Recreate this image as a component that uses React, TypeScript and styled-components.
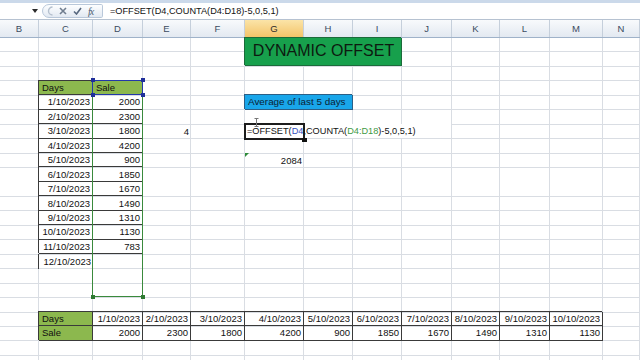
import styled, { createGlobalStyle, css } from "styled-components";

// column widths B..N as they appear in the zoomed sheet
const COLS = [39, 54, 50, 48, 54, 59, 49, 49, 50, 48, 50, 53, 37];
const LETTERS = ["B", "C", "D", "E", "F", "G", "H", "I", "J", "K", "L", "M", "N"];
const ROW_H = 14.45;
const TEMPLATE = COLS.map((w) => `${w}px`).join(" ");
const GRID = "#d9dde3";
const INK = "#3a3a3a";

const edges = COLS.reduce<number[]>((acc, w) => {
  const prev = acc.length ? acc[acc.length - 1] : -1;
  acc.push(prev + w);
  return acc;
}, []);
const vLines = edges
  .map((x) => `linear-gradient(${GRID}, ${GRID}) ${x}px 0 / 1px 100% no-repeat`)
  .join(", ");
const hLines = `repeating-linear-gradient(to bottom, transparent 0, transparent ${ROW_H - 1}px, ${GRID} ${ROW_H - 1}px, ${GRID} ${ROW_H}px)`;

const DATES = Array.from({ length: 12 }, (_, i) => `${i + 1}/10/2023`);
const SALES = [2000, 2300, 1800, 4200, 900, 1850, 1670, 1490, 1310, 1130, 783];

const GlobalStyle = createGlobalStyle`
  * { box-sizing: border-box; }
  body { margin: 0; background: #fff; }
`;

const Window = styled.div`
  width: 640px;
  height: 360px;
  overflow: hidden;
  background: #fff;
  display: flex;
  flex-direction: column;
  font-family: "Liberation Sans", Arial, sans-serif;
`;

const FormulaBar = styled.div`
  height: 20px;
  flex-shrink: 0;
  display: flex;
  align-items: center;
  border-top: 3px solid #cbd9ea;
  border-bottom: 1px solid #b6c2d1;
`;

const NameBox = styled.div`
  width: 42px;
  height: 100%;
  display: flex;
  align-items: center;
  justify-content: flex-end;
  padding-right: 4px;
`;

const FxPill = styled.div`
  width: 61px;
  height: 14px;
  display: flex;
  align-items: center;
  gap: 6px;
  padding-left: 4px;
  border: 1px solid #b9c8da;
  border-radius: 8px 2px 2px 8px;
  background: linear-gradient(#fdfeff, #e2e9f2);
`;

const Fx = styled.span`
  font-family: "Liberation Serif", serif;
  font-style: italic;
  font-size: 10px;
  color: #4e5d72;
  letter-spacing: -1px;
`;

const FormulaInput = styled.div`
  flex: 1;
  height: 100%;
  display: flex;
  align-items: center;
  padding-left: 7px;
  font-size: 9.2px;
  color: #111;
  white-space: nowrap;
`;

const ColumnHeaders = styled.div`
  display: grid;
  grid-template-columns: ${TEMPLATE};
  height: 17.5px;
  flex-shrink: 0;
  border-bottom: 1px solid #9fb2c9;
`;

const HeaderCell = styled.div<{ $active?: boolean }>`
  display: flex;
  align-items: center;
  justify-content: center;
  font-size: 9.5px;
  color: #3a4a60;
  border-right: 1px solid #c5cfdb;
  background: linear-gradient(#f8fafc, #e3e9f1);
  ${(p) =>
    p.$active &&
    css`
      background: linear-gradient(#fbe4a8, #f3c469);
      color: #2d2d2d;
    `}
`;

const Sheet = styled.div`
  flex: 1;
  display: grid;
  grid-template-columns: ${TEMPLATE};
  grid-template-rows: repeat(23, ${ROW_H}px);
  background: ${vLines}, ${hLines};
`;

type Box = "full" | "left" | "grid";

interface CellProps {
  $c: number;
  $r: number;
  $span?: number;
  $rows?: number;
  $align?: "left" | "right" | "center";
  $fill?: string;
  $box?: Box;
}

const Cell = styled.div<CellProps>`
  position: relative;
  grid-column: ${(p) => p.$c} / span ${(p) => p.$span ?? 1};
  grid-row: ${(p) => p.$r} / span ${(p) => p.$rows ?? 1};
  display: flex;
  align-items: center;
  justify-content: ${(p) =>
    p.$align === "right" ? "flex-end" : p.$align === "center" ? "center" : "flex-start"};
  padding: 0 2px 0 3px;
  font-size: 9.5px;
  color: #111;
  white-space: nowrap;
  background: ${(p) => p.$fill ?? "transparent"};
  ${(p) =>
    p.$box === "full" &&
    css`
      border-right: 1px solid ${INK};
      border-bottom: 1px solid ${INK};
      box-shadow: -1px -1px 0 0 ${INK};
    `}
  ${(p) =>
    p.$box === "left" &&
    css`
      box-shadow: -1px 0 0 0 ${INK};
    `}
  ${(p) =>
    p.$box === "grid" &&
    css`
      border-right: 1px solid ${GRID};
      border-bottom: 1px solid ${GRID};
    `}
`;

const Title = styled(Cell)`
  font-size: 16px;
  color: #0d1a10;
  border-right: 1px solid #1b6b3a;
  border-bottom: 1px solid #1b6b3a;
  box-shadow: -1px -1px 0 0 #1b6b3a;
`;

const Label = styled(Cell)`
  font-size: 9.9px;
  color: #0b2233;
  border-right: 1px solid #2b5f86;
  border-bottom: 1px solid #2b5f86;
  box-shadow: -1px -1px 0 0 #2b5f86;
`;

const FormulaCell = styled(Cell)`
  font-size: 9.2px;
  padding-left: 2px;
`;

const Ref = styled.span<{ $tone: "blue" | "green" }>`
  color: ${(p) => (p.$tone === "blue" ? "#3550c0" : "#3d9a44")};
`;

const ErrorMark = styled.span`
  position: absolute;
  top: 0;
  left: 0;
  border-top: 4px solid #2e8b3a;
  border-right: 4px solid transparent;
`;

const RangeBox = styled.div<{ $c: number; $r: number; $rows: number; $tone: string }>`
  position: relative;
  grid-column: ${(p) => p.$c};
  grid-row: ${(p) => p.$r} / span ${(p) => p.$rows};
  margin: -1px 0 0 -1px;
  border: 1px solid ${(p) => p.$tone};
  pointer-events: none;
`;

const Handle = styled.span<{ $at: "tl" | "tr" | "bl" | "br"; $tone: string }>`
  position: absolute;
  width: 4px;
  height: 4px;
  background: ${(p) => p.$tone};
  ${(p) => (p.$at[0] === "t" ? "top: -2.5px;" : "bottom: -2.5px;")}
  ${(p) => (p.$at[1] === "l" ? "left: -2.5px;" : "right: -2.5px;")}
`;

const Selection = styled.div`
  position: relative;
  grid-column: 6;
  grid-row: 7;
  margin: -1px;
  border: 2px solid #1c1c1c;
  pointer-events: none;
`;

const FillHandle = styled.span`
  position: absolute;
  right: -4px;
  bottom: -4px;
  width: 5px;
  height: 4px;
  background: #111;
`;

const Cursor = styled.svg`
  position: absolute;
  left: 8px;
  top: -7px;
`;

const GREEN = "#8cb84e";

function FormulaText() {
  return (
    <>
      =OFFSET(<Ref $tone="blue">D4</Ref>,COUNTA(<Ref $tone="green">D4:D18</Ref>)-5,0,5,1)
    </>
  );
}

export default function App() {
  return (
    <Window>
      <GlobalStyle />
      <FormulaBar>
        <NameBox>
          <svg width="6" height="4" viewBox="0 0 6 4">
            <path d="M0 0 H6 L3 4 Z" fill="#2b2b2b" />
          </svg>
        </NameBox>
        <FxPill>
          <svg width="6" height="10" viewBox="0 0 6 10">
            <path d="M5.5 1 A4 4 0 0 0 5.5 9" stroke="#b5c0ce" strokeWidth="1.4" fill="none" />
          </svg>
          <svg width="8" height="8" viewBox="0 0 8 8">
            <path d="M1 1 L7 7 M7 1 L1 7" stroke="#6f7d8f" strokeWidth="1.6" />
          </svg>
          <svg width="9" height="8" viewBox="0 0 9 8">
            <path d="M1 4.5 L3.5 7 L8 1" stroke="#56677e" strokeWidth="1.6" fill="none" />
          </svg>
          <Fx>fx</Fx>
        </FxPill>
        <FormulaInput>=OFFSET(D4,COUNTA(D4:D18)-5,0,5,1)</FormulaInput>
      </FormulaBar>

      <ColumnHeaders>
        {LETTERS.map((l) => (
          <HeaderCell key={l} $active={l === "G"}>
            {l}
          </HeaderCell>
        ))}
      </ColumnHeaders>

      <Sheet>
        <Title $c={6} $r={1} $span={3} $rows={2} $align="center" $fill="#17a04c">
          DYNAMIC OFFSET
        </Title>

        <Cell $c={2} $r={4} $fill={GREEN} $box="full">Days</Cell>
        <Cell $c={3} $r={4} $fill={GREEN} $box="full">Sale</Cell>
        {DATES.map((d, i) => (
          <Cell key={d} $c={2} $r={5 + i} $align="right" $box={i < 11 ? "full" : "left"}>
            {d}
          </Cell>
        ))}
        {SALES.map((s, i) => (
          <Cell key={i} $c={3} $r={5 + i} $align="right" $box="full">
            {s}
          </Cell>
        ))}

        <Label $c={6} $r={5} $span={2} $fill="#19a6ea">Average of last 5 days</Label>

        <Cell $c={4} $r={7} $align="right">4</Cell>
        <FormulaCell $c={6} $r={7} $span={4} $fill="#fff" $box="grid">
          <FormulaText />
        </FormulaCell>
        <Cell $c={6} $r={9} $align="right">
          <ErrorMark />
          2084
        </Cell>

        <Cell $c={2} $r={20} $fill={GREEN} $box="full">Days</Cell>
        <Cell $c={2} $r={21} $fill={GREEN} $box="full">Sale</Cell>
        {SALES.slice(0, 10).map((s, i) => (
          <Cell key={`d${i}`} $c={3 + i} $r={20} $align="right" $box="full">
            {DATES[i]}
          </Cell>
        ))}
        {SALES.slice(0, 10).map((s, i) => (
          <Cell key={`s${i}`} $c={3 + i} $r={21} $align="right" $box="full">
            {s}
          </Cell>
        ))}

        <RangeBox $c={3} $r={4} $rows={15} $tone="#3a8a3c">
          <Handle $at="bl" $tone="#2f7a32" />
          <Handle $at="br" $tone="#2f7a32" />
        </RangeBox>
        <RangeBox $c={3} $r={4} $rows={1} $tone="#2338a8">
          <Handle $at="tl" $tone="#1f2f9a" />
          <Handle $at="tr" $tone="#1f2f9a" />
          <Handle $at="bl" $tone="#1f2f9a" />
          <Handle $at="br" $tone="#1f2f9a" />
        </RangeBox>

        <Selection>
          <Cursor width="5" height="9" viewBox="0 0 5 9">
            <path d="M0.5 0.5 H4.5 M2.5 0.5 V8.5 M0.5 8.5 H4.5" stroke="#777" strokeWidth="1" />
          </Cursor>
          <FillHandle />
        </Selection>
      </Sheet>
    </Window>
  );
}
